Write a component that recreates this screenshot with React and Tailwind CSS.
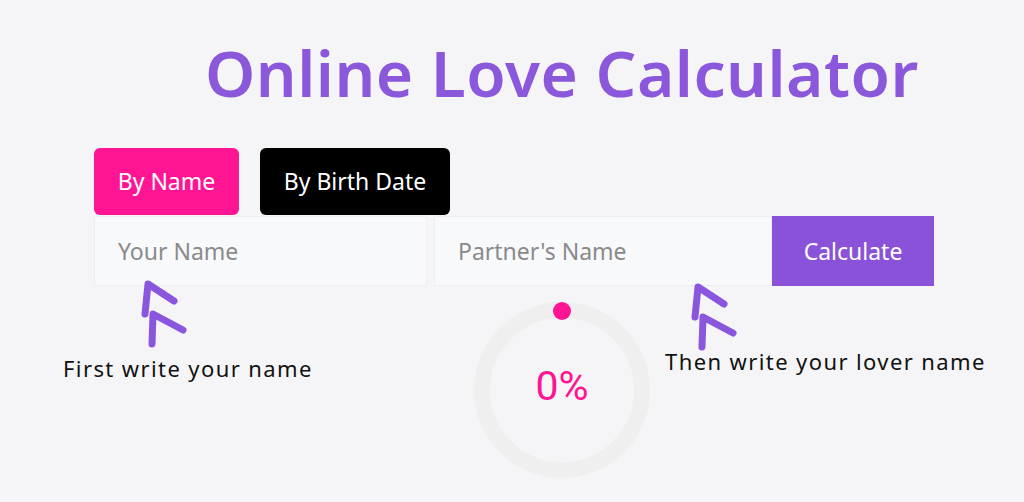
const Arrow = ({ className }) => (
  <svg viewBox="0 0 56 70" className={className} fill="none">
    <path
      d="M5 34 L8 4 L34 21 M12 64 L13 34 L43 50"
      stroke="#8a56dd"
      strokeWidth="7"
      strokeLinecap="round"
      strokeLinejoin="round"
    />
  </svg>
);

const App = () => {
  return (
    <div className="min-h-screen w-full bg-[#f5f5f7] overflow-hidden">
      <h1 className="pt-[33px] ml-[205px] text-[64px] leading-[80px] font-semibold text-[#8b57db] tracking-[0.5px] font-['Noto_Sans',sans-serif] whitespace-nowrap">
        Online Love Calculator
      </h1>

      <div className="ml-[94px] mt-[35px] w-[841px] font-['Noto_Sans',sans-serif]">
        <div className="flex gap-[21px]">
          <button className="w-[145px] h-[67px] rounded-[6px] bg-[#ff1493] text-white text-[23px]">
            By Name
          </button>
          <button className="w-[190px] h-[67px] rounded-[6px] bg-black text-white text-[23px]">
            By Birth Date
          </button>
        </div>
        <div className="flex h-[70px] mt-[1px]">
          <input
            placeholder="Your Name"
            className="w-[333px] h-full border border-[#eeeef0] bg-[#f8f9fb] pl-[23px] text-[23px] placeholder:text-[#8a8a8a] outline-none"
          />
          <input
            placeholder="Partner's Name"
            className="w-[338px] ml-[7px] h-full border border-[#eeeef0] bg-[#f8f9fb] pl-[23px] text-[23px] placeholder:text-[#8a8a8a] outline-none"
          />
          <button className="w-[162px] h-full bg-[#8a52d9] text-white text-[23px]">
            Calculate
          </button>
        </div>
      </div>

      <div className="flex -mt-[6px] font-['Noto_Sans',sans-serif]">
        <div className="ml-[63px] w-[250px] flex flex-col">
          <Arrow className="ml-[77px] w-[56px] h-[70px]" />
          <p className="mt-[3px] text-[22px] leading-[30px] text-[#111] tracking-[1.4px] whitespace-nowrap">
            First write your name
          </p>
        </div>

        <div className="ml-[161px] mt-[22px] relative w-[176px] h-[176px]">
          <svg viewBox="0 0 176 176" className="w-full h-full">
            <circle cx="88" cy="88" r="80" stroke="#efefef" strokeWidth="16" fill="none" />
            <circle cx="88" cy="9" r="9" fill="#ff1493" />
          </svg>
          <div className="absolute inset-0 flex items-center justify-center pb-[6px] text-[41px] text-[#ff1493] font-['Roboto',sans-serif]">
            0%
          </div>
        </div>

        <div className="ml-[15px] flex flex-col">
          <Arrow className="ml-[25px] mt-[3px] w-[56px] h-[70px]" />
          <p className="-mt-[7px] text-[22px] leading-[30px] text-[#111] tracking-[1.4px] whitespace-nowrap">
            Then write your lover name
          </p>
        </div>
      </div>
    </div>
  );
};

export default App;
